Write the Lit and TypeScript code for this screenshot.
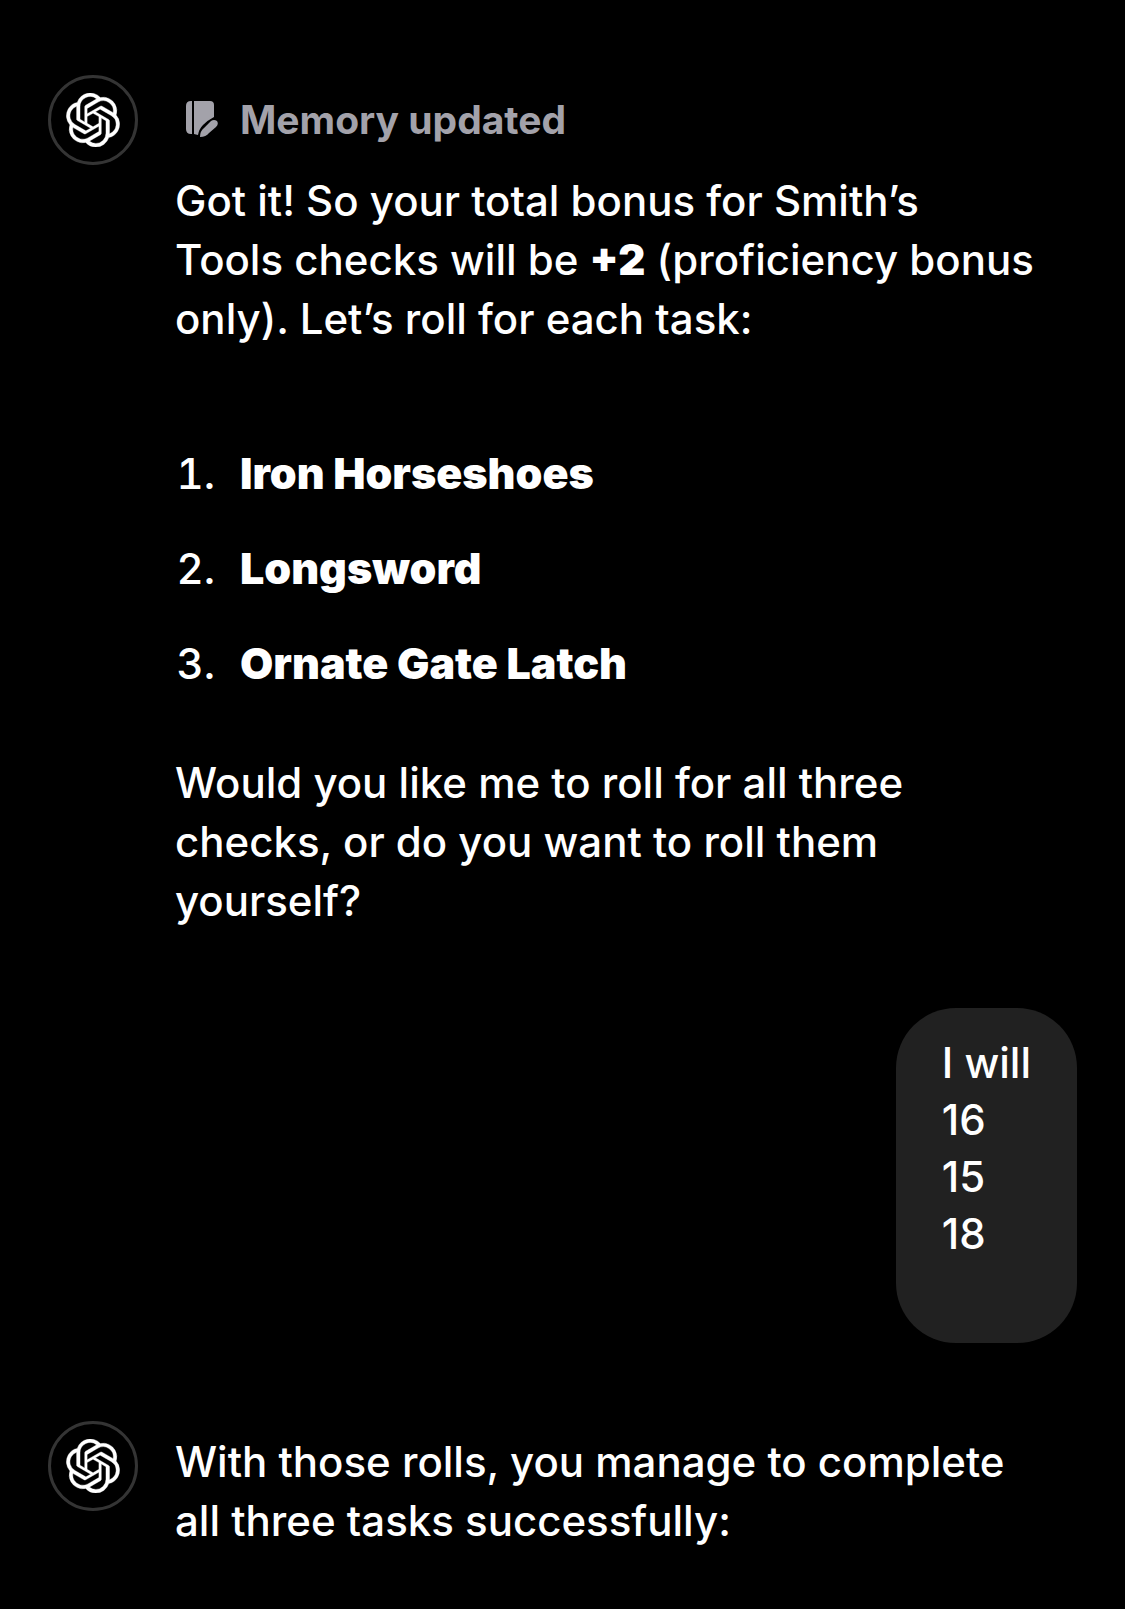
import { LitElement, html, css } from "lit";
import { customElement } from "lit/decorators.js";

@customElement("chat-avatar")
class ChatAvatar extends LitElement {
  static styles = css`
    :host {
      display: flex;
      align-items: center;
      justify-content: center;
      flex: none;
      box-sizing: border-box;
      width: 90px;
      height: 90px;
      border: 3px solid #343434;
      border-radius: 50%;
    }
    .logo {
      width: 54px;
      height: 54px;
      fill: #fff;
      stroke: #fff;
      stroke-width: 0.15;
    }
  `;

  render() {
    return html`
      <svg class="logo" viewBox="0 0 24 24" role="img" aria-label="ChatGPT">
        <path
          d="M22.2819 9.8211a5.9847 5.9847 0 0 0-.5157-4.9108 6.0462 6.0462 0 0 0-6.5098-2.9A6.0651 6.0651 0 0 0 4.9807 4.1818a5.9847 5.9847 0 0 0-3.9977 2.9 6.0462 6.0462 0 0 0 .7427 7.0966 5.98 5.98 0 0 0 .511 4.9107 6.051 6.051 0 0 0 6.5146 2.9001A5.9847 5.9847 0 0 0 13.2599 24a6.0557 6.0557 0 0 0 5.7718-4.2058 5.9894 5.9894 0 0 0 3.9977-2.9001 6.0557 6.0557 0 0 0-.7475-7.0729zm-9.022 12.6081a4.4755 4.4755 0 0 1-2.8764-1.0408l.1419-.0804 4.7783-2.7582a.7948.7948 0 0 0 .3927-.6813v-6.7369l2.02 1.1686a.071.071 0 0 1 .038.052v5.5826a4.504 4.504 0 0 1-4.4945 4.4944zm-9.6607-4.1254a4.4708 4.4708 0 0 1-.5346-3.0137l.142.0852 4.783 2.7582a.7712.7712 0 0 0 .7806 0l5.8428-3.3685v2.3324a.0804.0804 0 0 1-.0332.0615L9.74 19.9502a4.4992 4.4992 0 0 1-6.1408-1.6464zM2.3408 7.8956a4.485 4.485 0 0 1 2.3655-1.9728V11.6a.7664.7664 0 0 0 .3879.6765l5.8144 3.3543-2.0201 1.1685a.0757.0757 0 0 1-.071 0l-4.8303-2.7865A4.504 4.504 0 0 1 2.3408 7.872zm16.5963 3.8558L13.1038 8.364 15.1192 7.2a.0757.0757 0 0 1 .071 0l4.8303 2.7913a4.4944 4.4944 0 0 1-.6765 8.1042v-5.6772a.79.79 0 0 0-.407-.667zm2.0107-3.0231l-.142-.0852-4.7735-2.7818a.7759.7759 0 0 0-.7854 0L9.409 9.2297V6.8974a.0662.0662 0 0 1 .0284-.0615l4.8303-2.7866a4.4992 4.4992 0 0 1 6.6802 4.66zM8.3065 12.863l-2.02-1.1638a.0804.0804 0 0 1-.038-.0567V6.0742a4.4992 4.4992 0 0 1 7.3757-3.4537l-.142.0805L8.704 5.459a.7948.7948 0 0 0-.3927.6813zm1.0976-2.3654l2.602-1.4998 2.6069 1.4998v2.9994l-2.5974 1.4997-2.6067-1.4997Z"
        />
      </svg>
    `;
  }
}

@customElement("app-root")
class AppRoot extends LitElement {
  static styles = css`
    :host {
      display: block;
      box-sizing: border-box;
      min-height: 100vh;
      padding: 75px 48px 40px;
      background: #000;
      color: #fff;
      font-family: Inter, "Liberation Sans", sans-serif;
      font-size: 42px;
      font-weight: 500;
      line-height: 59px;
    }
    .chat {
      display: flex;
      flex-direction: column;
      gap: 78px;
    }
    .reply {
      display: flex;
      align-items: flex-start;
      gap: 37px;
      padding-right: 42px;
    }
    .body {
      flex: 1;
      min-width: 0;
    }
    .plain {
      padding-top: 11px;
    }
    p {
      margin: 0;
    }
    strong {
      font-weight: 900;
    }
    .memory {
      display: flex;
      align-items: center;
      gap: 22px;
      height: 88px;
      padding-left: 11px;
      margin-bottom: 8px;
      color: #a3a2aa;
      font-size: 39px;
      font-weight: 700;
    }
    .memory-icon {
      width: 32px;
      height: 36px;
      fill: currentColor;
    }
    .steps {
      display: flex;
      flex-direction: column;
      gap: 36px;
      margin: 96px 0 60px;
      padding: 0;
      list-style: none;
      counter-reset: step;
    }
    .steps li {
      display: grid;
      grid-template-columns: 40px 1fr;
      column-gap: 25px;
      counter-increment: step;
    }
    .steps li::before {
      content: counter(step) ".";
      text-align: right;
      font-variant-numeric: tabular-nums;
    }
    .steps strong {
      font-size: 43px;
    }
    .bubble {
      align-self: flex-end;
      padding: 26px 46px 24px;
      border-radius: 60px;
      background: #212121;
      line-height: 57px;
    }
  `;

  private steps = ["Iron Horseshoes", "Longsword", "Ornate Gate Latch"];
  private rolls = ["I will", "16", "15", "18"];

  render() {
    return html`
      <main class="chat">
        <article class="reply">
          <chat-avatar></chat-avatar>
          <div class="body">
            <div class="memory">
              <svg class="memory-icon" viewBox="0 0 32 36" aria-hidden="true">
                <path d="M5 0H6V33H5Q0 33 0 28V5Q0 0 5 0Z" />
                <path d="M8 0H24Q28 0 28 4V16Q22 19 17 24Q13 28 12 34L8 33Z" />
                <path d="M14 36Q14 30 18 27L25 20Q28 18 31 20Q33 23 30 26L23 32Q20 36 14 36Z" />
              </svg>
              <span>Memory updated</span>
            </div>
            <p>
              Got it! So your total bonus for Smith’s Tools checks will be
              <strong>+2</strong> (proficiency bonus only). Let’s roll for each task:
            </p>
            <ol class="steps">
              ${this.steps.map((s) => html`<li><strong>${s}</strong></li>`)}
            </ol>
            <p>
              Would you like me to roll for all three checks, or do you want to
              roll them yourself?
            </p>
          </div>
        </article>
        <div class="bubble">
          ${this.rolls.map((r) => html`<p>${r}</p>`)}
          <p><br /></p>
        </div>
        <article class="reply">
          <chat-avatar></chat-avatar>
          <div class="body plain">
            <p>With those rolls, you manage to complete all three tasks successfully:</p>
          </div>
        </article>
      </main>
    `;
  }
}
